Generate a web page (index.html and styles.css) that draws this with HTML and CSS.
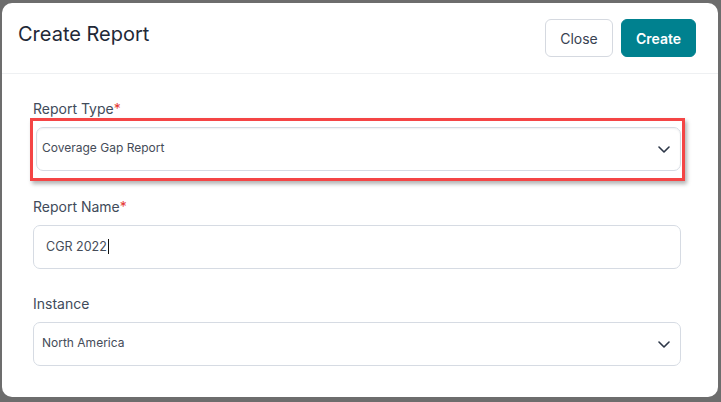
FILE: index.html
```html
<!DOCTYPE html>
<html lang="en">
<head>
    <meta charset="UTF-8">
    <meta name="viewport" content="width=device-width, initial-scale=1.0">
    <title>Create Report</title>
    <link rel="stylesheet" href="styles.css">
</head>
<body>
    <div class="modal">
        <div class="modal-header">
            <h2 class="modal-title">Create Report</h2>
            <div class="actions">
                <button class="btn btn-close">Close</button>
                <button class="btn btn-create">Create</button>
            </div>
        </div>

        <div class="modal-body">
            <div class="field">
                <label class="field-label">Report Type<span class="req">*</span></label>
                <div class="control-wrap">
                    <div class="select">
                        <span class="select-text">Coverage Gap Report</span>
                        <svg class="chevron" width="12" height="7" viewBox="0 0 12 7"><path d="M1 1l5 5 5-5" fill="none" stroke="#2d3748" stroke-width="1.6" stroke-linecap="round" stroke-linejoin="round"/></svg>
                    </div>
                    <div class="highlight"></div>
                </div>
            </div>

            <div class="field">
                <label class="field-label">Report Name<span class="req">*</span></label>
                <div class="input">
                    <span>CGR 2022</span><span class="caret"></span>
                </div>
            </div>

            <div class="field">
                <label class="field-label">Instance</label>
                <div class="select">
                    <span class="select-text">North America</span>
                    <svg class="chevron" width="12" height="7" viewBox="0 0 12 7"><path d="M1 1l5 5 5-5" fill="none" stroke="#2d3748" stroke-width="1.6" stroke-linecap="round" stroke-linejoin="round"/></svg>
                </div>
            </div>
        </div>
    </div>
</body>
</html>
```

FILE: styles.css
```css
* {box-sizing: border-box;}

body {
margin: 0;
padding: 3px 3px 5px 2px;
background-color: #6d6d6d;
font-family: Inter, "Noto Sans", sans-serif;
}

/* Modal card */
.modal {
width: 716px;
height: 394px;
background-color: #fff;
border-radius: 10px;
overflow: hidden;
}

.modal-header {
display: flex;
justify-content: space-between;
align-items: flex-start;
height: 71px;
padding: 16px 22px 0 16px;
border-bottom: 1px solid #eef0f2;
}

.modal-title {
margin: 0;
padding-top: 1px;
font-size: 20px;
line-height: 28px;
font-weight: 400;
color: #1f2937;
}

.actions {
display: flex;
gap: 8px;
}

.btn {
height: 38px;
border-radius: 6px;
font-family: inherit;
font-size: 14px;
cursor: pointer;
}

.btn-close {
width: 68px;
background-color: #fff;
border: 1px solid #d5d9e0;
color: #374151;
}

.btn-create {
width: 75px;
background-color: #00818f;
border: 1px solid #00818f;
color: #fff;
font-weight: 600;
}

/* Form */
.modal-body {
display: flex;
flex-direction: column;
gap: 25.5px;
padding: 25px 37px 0 31px;
}

.field-label {
display: block;
margin-bottom: 9px;
font-size: 14px;
line-height: 19px;
color: #414b5a;
}

.req {
color: #e53935;
}

.control-wrap {
position: relative;
}

.select, .input {
display: flex;
align-items: center;
height: 44px;
border: 1px solid #d6dbe3;
border-radius: 7px;
background-color: #fff;
color: #454c58;
}

.select {
justify-content: space-between;
padding: 0 10px 0 8px;
font-size: 12px;
}

.select-text {
margin-top: -4px;
}

.input {
padding: 0 12px;
font-size: 12.5px;
}

.caret {
display: inline-block;
width: 1px;
height: 15px;
margin-left: 1px;
background-color: #111;
}

/* red annotation box round the first select */
.highlight {
position: absolute;
top: -9px;
left: -3px;
right: -4px;
bottom: -10px;
border: 3px solid #f44545;
box-shadow: 2px 3px 4px rgba(0, 0, 0, 0.3);
pointer-events: none;
}

.control-wrap .select {
margin-left: 3px;
padding-left: 5px;
box-shadow: inset 0 1px 2px rgba(0, 0, 0, 0.06);
}
```
